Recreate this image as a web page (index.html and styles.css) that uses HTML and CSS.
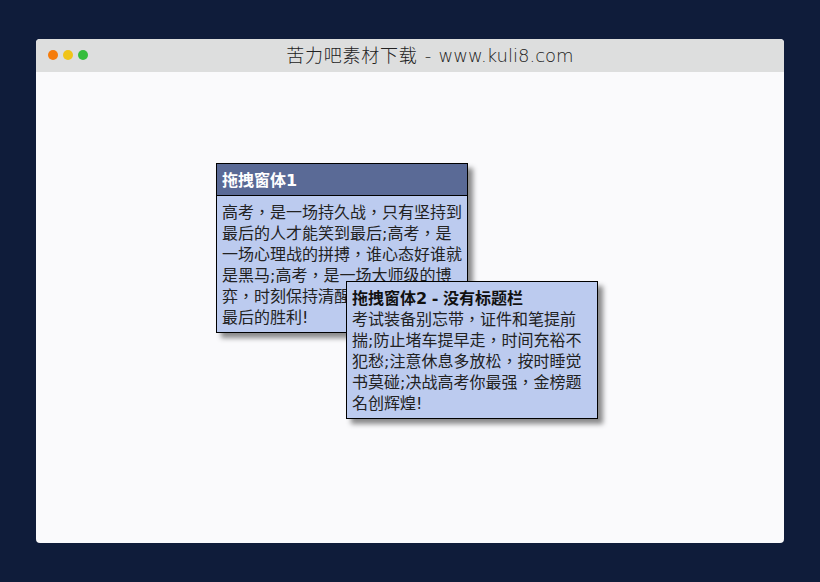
FILE: index.html
```html
<!DOCTYPE html>
<html lang="en">
<head>
    <meta charset="UTF-8">
    <meta name="viewport" content="width=device-width, initial-scale=1.0">
    <title>苦力吧素材下载</title>
    <link rel="stylesheet" href="styles.css">
</head>
<body>
    <div class="browser">
        <!-- Title bar with the three dots -->
        <div class="browser-bar">
            <div class="dots">
                <span class="dot dot-orange"></span>
                <span class="dot dot-yellow"></span>
                <span class="dot dot-green"></span>
            </div>
            <div class="browser-title"><span class="title-cjk">苦力吧素材下载</span> - www.kuli8.com</div>
        </div>

        <div class="browser-body">
            <!-- Drag window with a title bar -->
            <div class="drag-win win-one">
                <div class="win-head">拖拽窗体1</div>
                <div class="win-text">高考，是一场持久战，只有坚持到最后的人才能笑到最后;高考，是一场心理战的拼搏，谁心态好谁就是黑马;高考，是一场大师级的博弈，时刻保持清醒头脑，才能赢得最后的胜利!</div>
            </div>

            <!-- Drag window without a title bar -->
            <div class="drag-win win-two">
                <div class="win-text">
                    <b>拖拽窗体2 - 没有标题栏</b><br>
                    考试装备别忘带，证件和笔提前揣;防止堵车提早走，时间充裕不犯愁;注意休息多放松，按时睡觉书莫碰;决战高考你最强，金榜题名创辉煌!
                </div>
            </div>
        </div>
    </div>
</body>
</html>
```

FILE: styles.css
```css
body {
    margin: 0;
    width: 820px;
    height: 582px;
    overflow: hidden;
    background: #0f1c3a;
    font-family: "DejaVu Sans", "Noto Sans CJK TC", sans-serif;
}

.browser {
    width: 748px;
    height: 504px;
    margin: 39px 0 0 36px;
    border-radius: 4px;
    overflow: hidden;
    display: flex;
    flex-direction: column;
    background: #fafafc;
}

.browser-bar {
    height: 33px;
    padding: 0 0 3px 40px;
    box-sizing: border-box;
    background: #dddede;
    position: relative;
    display: flex;
    align-items: center;
    justify-content: center;
}

.dots {
    position: absolute;
    left: 12px;
    top: 11px;
    display: flex;
    gap: 5px;
}

.dot {
    width: 10px;
    height: 10px;
    border-radius: 50%;
}

.dot-orange { background: #f57c0c; }
.dot-yellow { background: #f0c419; }
.dot-green { background: #35bd3c; }

.browser-title {
    font-family: "DejaVu Sans", "Noto Sans CJK SC", sans-serif;
    font-size: 18px;
    font-weight: 200;
    word-spacing: 1.5px;
    color: #222;
    white-space: nowrap;
}

.title-cjk {
    letter-spacing: 0.75px;
}

.browser-body {
    flex: 1;
    position: relative;
}

.drag-win {
    position: absolute;
    width: 250px;
    border: 1px solid #000;
    background: #bccbef;
    box-shadow: 5px 5px 5px rgba(0, 0, 0, 0.45);
    font-size: 16px;
    line-height: 21px;
    color: #222;
}

.win-one {
    left: 180px;
    top: 91px;
}

.win-two {
    left: 310px;
    top: 209px;
}

.win-head {
    height: 31px;
    line-height: 33px;
    padding: 0 5px;
    background: #5a6a96;
    border-bottom: 1px solid #000;
    color: #fff;
    font-weight: bold;
}

.win-text {
    padding: 6px 5px 4px;
}

.win-text b {
    color: #111;
    word-spacing: -1px;
}
```
